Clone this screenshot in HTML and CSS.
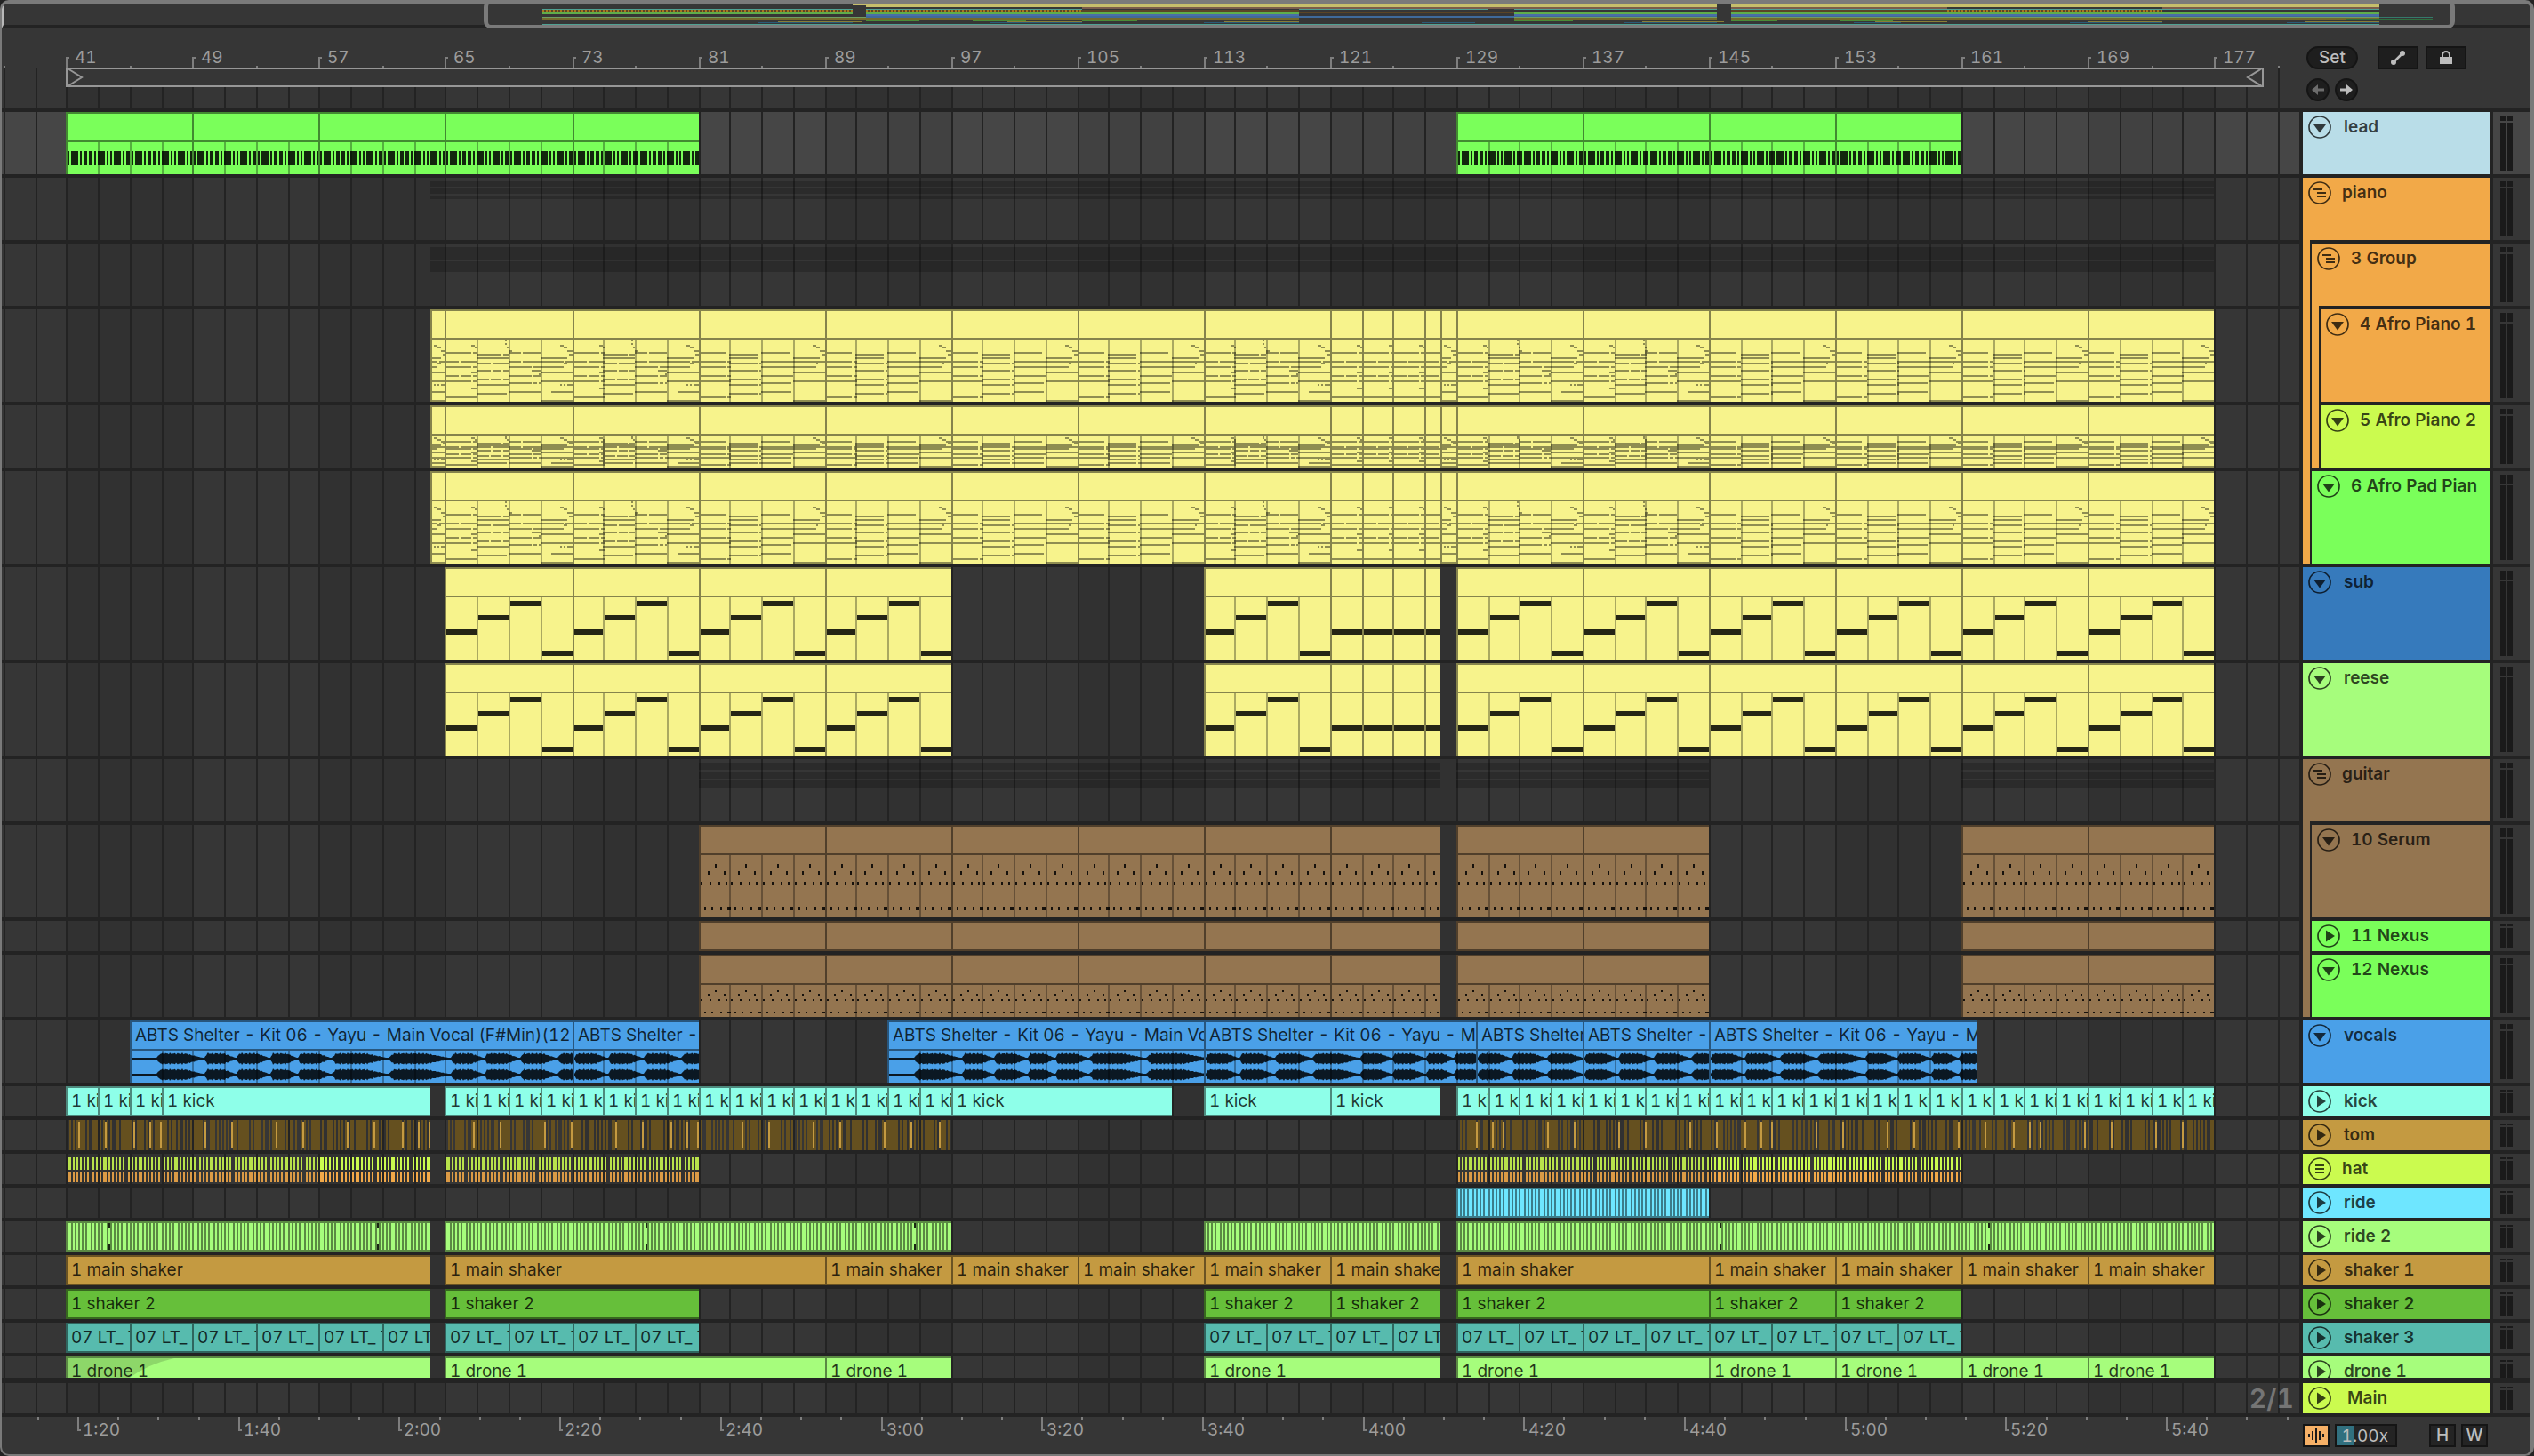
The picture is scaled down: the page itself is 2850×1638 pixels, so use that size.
FILE: index.html
```html
<!DOCTYPE html>
<html lang="en">
<head>
<meta charset="utf-8">
<title>Arrangement</title>
<meta name="viewport" content="width=device-width, initial-scale=1">
<link rel="stylesheet" href="styles.css">
</head>
<body>
<svg class="sprite" aria-hidden="true">
  <symbol id="i-open" viewBox="0 0 26 26"><circle cx="13" cy="13" r="12" fill="none" stroke="currentColor" stroke-width="1.700"/><path d="M6 10h14l-7 9.500z" fill="currentColor"/></symbol>
  <symbol id="i-closed" viewBox="0 0 26 26"><circle cx="13" cy="13" r="12" fill="none" stroke="currentColor" stroke-width="1.700"/><path d="M10 6.500v13l10-6.500z" fill="currentColor"/></symbol>
  <symbol id="i-group" viewBox="0 0 26 26"><circle cx="13" cy="13" r="12" fill="none" stroke="currentColor" stroke-width="1.700"/><path d="M6 9h10M10 13h10M10 17h10" fill="none" stroke="currentColor" stroke-width="2"/></symbol>
  <symbol id="i-list" viewBox="0 0 26 26"><circle cx="13" cy="13" r="12" fill="none" stroke="currentColor" stroke-width="1.700"/><path d="M8 9h10M8 13h10M8 17h10" fill="none" stroke="currentColor" stroke-width="2"/></symbol>
</svg>
<main class="app">
  <section class="overview" aria-label="Overview">
    <svg class="overview-map" viewBox="0 0 2844 24" preserveAspectRatio="none" shape-rendering="crispEdges"></svg>
    <div class="overview-window"></div>
  </section>

  <section class="top">
    <div class="timeline-head">
      <div class="ruler" id="bars"></div>
      <div class="scrub" id="scrub">
        <svg class="loop" id="loop"></svg>
      </div>
    </div>
    <div class="locators">
      <div class="controls">
        <button class="pill" type="button">Set</button>
        <button class="box first" type="button" aria-label="Automation mode"><svg width="18" height="18" viewBox="0 0 18 18"><path d="M4 14 14 4" stroke="currentColor" stroke-width="2.500"/><circle cx="4" cy="14" r="3" fill="currentColor"/><circle cx="14" cy="4" r="3" fill="currentColor"/></svg></button>
        <button class="box" type="button" aria-label="Lock envelopes"><svg width="18" height="18" viewBox="0 0 18 18"><path d="M2 8h14v8H2z" fill="currentColor"/><path d="M5 8V6a4 4 0 0 1 8 0v2" fill="none" stroke="currentColor" stroke-width="2"/></svg></button>
      </div>
      <div class="controls">
        <button class="round dim" type="button" aria-label="Previous locator"><svg width="16" height="14" viewBox="0 0 16 14"><path d="M1 7 8 1v4.500h7v3H8V13z" fill="currentColor"/></svg></button>
        <button class="round" type="button" aria-label="Next locator"><svg width="16" height="14" viewBox="0 0 16 14"><path d="M15 7 8 1v4.500H1v3h7V13z" fill="currentColor"/></svg></button>
      </div>
    </div>
  </section>

  <section class="board">
    <div class="lanes">
      <div class="lane mid selected green" data-kind="lead" data-clips="41 49 57 65 73 81|129 137 145 153 161"></div>
      <div class="lane mid" data-kind="ghost" data-rows="4-10 12-18 20-24" data-clips="64 177"></div>
      <div class="lane mid" data-kind="ghost" data-rows="4-18 20-32" data-clips="64 177"></div>
      <div class="lane tall yellow" data-kind="chords" data-clips="64 65 73 81 89 97 105 113 121 123 125 127 128 129 137 145 153 161 169 177"></div>
      <div class="lane mid yellow" data-kind="chords" data-clips="64 65 73 81 89 97 105 113 121 123 125 127 128 129 137 145 153 161 169 177"></div>
      <div class="lane tall yellow" data-kind="chords" data-clips="64 65 73 81 89 97 105 113 121 123 125 127 128 129 137 145 153 161 169 177"></div>
      <div class="lane tall yellow" data-kind="bass" data-clips="65 73 81 89 97|113 121 123 125 127 128|129 137 145 153 161 169 177"></div>
      <div class="lane tall yellow" data-kind="bass" data-clips="65 73 81 89 97|113 121 123 125 127 128|129 137 145 153 161 169 177"></div>
      <div class="lane mid" data-kind="ghost" data-rows="4-12 14-22 24-32" data-clips="81 128|129 145|161 177"></div>
      <div class="lane tall brown" data-kind="arp" data-clips="81 89 97 105 113 121 128|129 137 145|161 169 177"></div>
      <div class="lane brown" data-kind="plain" data-clips="81 89 97 105 113 121 128|129 137 145|161 169 177"></div>
      <div class="lane mid brown" data-kind="arp" data-clips="81 89 97 105 113 121 128|129 137 145|161 169 177"></div>
      <div class="lane mid blue" data-kind="wave" data-label="ABTS Shelter - Kit 06 - Yayu - Main Vocal (F#Min)(12" data-clips="45 73 81|93 113 130.25 137 145 162"></div>
      <div class="lane aqua" data-kind="plain" data-label="1 kick" data-clips="41 43 45 47 64|65 67 69 71 73 75 77 79 81 83 85 87 89 91 93 95 97 111|113 121 128|129 131 133 135 137 139 141 143 145 147 149 151 153 155 157 159 161 163 165 167 169 171 173 175 177"></div>
      <div class="lane gold" data-kind="tom" data-clips="41 64|65 97|129 177"></div>
      <div class="lane lime" data-kind="hat" data-clips="41 57 64|65 81|129 145 161"></div>
      <div class="lane cyan" data-kind="ride" data-clips="129 145"></div>
      <div class="lane mint" data-kind="ride" data-notches="43.65" data-clips="41 64|65 97|113 128|129 177"></div>
      <div class="lane gold" data-kind="plain" data-label="1 main shaker" data-clips="41 64|65 89 97 105 113 121 128|129 145 153 161 169 177"></div>
      <div class="lane leaf" data-kind="plain" data-label="1 shaker 2" data-clips="41 64|65 81|113 121 128|129 145 153 161"></div>
      <div class="lane teal" data-kind="plain" data-label="07 LT_ T" data-clips="41 45 49 53 57 61 64|65 69 73 77 81|113 117 121 125 128|129 133 137 141 145 149 153 157 161"></div>
      <div class="lane cut mint" data-kind="plain" data-label="1 drone 1" data-fade="41" data-clips="41 64|65 89 97|113 128|129 145 153 161 169 177"></div>
      <div class="lane main-lane" data-kind="plain" data-clips=""><span class="zoom-level">2/1</span></div>
    </div>

    <div class="heads">
      <div class="head mid sky"><button type="button" aria-label="Fold lead"><svg><use href="#i-open"/></svg></button><span>lead</span></div>
      <div class="group orange">
        <div class="head mid folder"><button type="button" aria-label="Fold piano"><svg><use href="#i-group"/></svg></button><span>piano</span></div>
        <div class="children">
          <div class="group orange">
            <div class="head mid folder"><button type="button" aria-label="Fold 3 Group"><svg><use href="#i-group"/></svg></button><span>3 Group</span></div>
            <div class="children">
              <div class="head tall folder orange"><button type="button" aria-label="Fold 4 Afro Piano 1"><svg><use href="#i-open"/></svg></button><span>4 Afro Piano 1</span></div>
              <div class="head mid folder lime"><button type="button" aria-label="Fold 5 Afro Piano 2"><svg><use href="#i-open"/></svg></button><span>5 Afro Piano 2</span></div>
            </div>
          </div>
          <div class="head tall folder green"><button type="button" aria-label="Fold 6 Afro Pad Piano"><svg><use href="#i-open"/></svg></button><span>6 Afro Pad Pian</span></div>
        </div>
      </div>
      <div class="head tall navy"><button type="button" aria-label="Fold sub"><svg><use href="#i-open"/></svg></button><span>sub</span></div>
      <div class="head tall mint"><button type="button" aria-label="Fold reese"><svg><use href="#i-open"/></svg></button><span>reese</span></div>
      <div class="group brown">
        <div class="head mid folder"><button type="button" aria-label="Fold guitar"><svg><use href="#i-group"/></svg></button><span>guitar</span></div>
        <div class="children">
          <div class="head tall folder brown"><button type="button" aria-label="Fold 10 Serum"><svg><use href="#i-open"/></svg></button><span>10 Serum</span></div>
          <div class="head folder green"><button type="button" aria-label="Unfold 11 Nexus"><svg><use href="#i-closed"/></svg></button><span>11 Nexus</span></div>
          <div class="head mid folder green"><button type="button" aria-label="Fold 12 Nexus"><svg><use href="#i-open"/></svg></button><span>12 Nexus</span></div>
        </div>
      </div>
      <div class="head mid blue"><button type="button" aria-label="Fold vocals"><svg><use href="#i-open"/></svg></button><span>vocals</span></div>
      <div class="head aqua"><button type="button" aria-label="Unfold kick"><svg><use href="#i-closed"/></svg></button><span>kick</span></div>
      <div class="head gold"><button type="button" aria-label="Unfold tom"><svg><use href="#i-closed"/></svg></button><span>tom</span></div>
      <div class="head folder lime"><button type="button" aria-label="Unfold hat"><svg><use href="#i-list"/></svg></button><span>hat</span></div>
      <div class="head cyan"><button type="button" aria-label="Unfold ride"><svg><use href="#i-closed"/></svg></button><span>ride</span></div>
      <div class="head mint"><button type="button" aria-label="Unfold ride 2"><svg><use href="#i-closed"/></svg></button><span>ride 2</span></div>
      <div class="head gold"><button type="button" aria-label="Unfold shaker 1"><svg><use href="#i-closed"/></svg></button><span>shaker 1</span></div>
      <div class="head leaf"><button type="button" aria-label="Unfold shaker 2"><svg><use href="#i-closed"/></svg></button><span>shaker 2</span></div>
      <div class="head teal"><button type="button" aria-label="Unfold shaker 3"><svg><use href="#i-closed"/></svg></button><span>shaker 3</span></div>
      <div class="head cut mint"><button type="button" aria-label="Unfold drone 1"><svg><use href="#i-closed"/></svg></button><span>drone 1</span></div>
      <div class="head main-head lime"><button type="button" aria-label="Unfold Main"><svg><use href="#i-closed"/></svg></button><span>Main</span></div>
    </div>

    <div class="meters" id="meters"></div>
  </section>

  <footer class="bottom">
    <div class="times" id="times"></div>
    <div class="footer-controls">
      <button class="key follow" type="button" aria-label="Waveform zoom"><svg width="20" height="18" viewBox="0 0 20 18"><path d="M2 7v4M6 4v10M10 1v16M14 4v10M18 7v4" stroke="#1a1a1a" stroke-width="2"/></svg></button>
      <input class="speed" type="text" value="1.00x" aria-label="Playback speed">
      <button class="key push" type="button">H</button>
      <button class="key" type="button">W</button>
    </div>
  </footer>
</main>
<script src="timeline.js"></script>
</body>
</html>
```
FILE: styles.css
```css
* { box-sizing: border-box; }

body {
  margin: 0;
  background: #232323;
  color: #9c9c9c;
  font: 400 19px/20px Inter, "Liberation Sans", sans-serif;
  font-variant-numeric: tabular-nums;
}

button, input { font: inherit; font-variant-numeric: inherit; color: inherit; margin: 0; padding: 0; }
.sprite { position: absolute; width: 0; height: 0; }

.app {
  min-height: 100vh;
  display: flex;
  flex-direction: column;
  border: solid #7a7a7a;
  border-width: 4px 4px 2px 2px;
  border-radius: 10px;
  background: #363636;
  overflow: hidden;
}

/* track colours */
.green  { --c: #7aff5a; }
.yellow { --c: #f7f38c; }
.brown  { --c: #947550; }
.blue   { --c: #4aa0e8; }
.navy   { --c: #367abc; }
.aqua   { --c: #8effe9; }
.gold   { --c: #c49a41; }
.lime   { --c: #cbfb4f; }
.cyan   { --c: #6ee6ff; }
.mint   { --c: #a6fd7c; }
.leaf   { --c: #66bf3a; }
.teal   { --c: #57bbae; }
.sky    { --c: #b9dde8; }
.orange { --c: #f2a948; }

/* overview */
.overview { position: relative; height: 28px; border-bottom: 4px solid #232323; border-left: 2px solid #b8b8b8; }
.overview-map { display: block; width: 100%; height: 24px; }
.overview-window {
  position: absolute;
  top: -4px;
  bottom: -4px;
  left: 19%;
  right: 3%;
  border: 4px solid #7a7a7a;
  border-left-width: 5px;
  border-right-width: 5px;
  border-radius: 8px;
}

/* bar ruler and locators */
.top { display: flex; border-bottom: 4px solid #232323; }
.timeline-head { flex: 1; min-width: 0; }
.ruler { position: relative; height: 44px; overflow: hidden; }
.ruler span, .times span { position: absolute; }
.ruler span { top: 23px; }
.ruler svg, .times svg, .grid, .scrub svg { position: absolute; inset: 0; width: 100%; height: 100%; }
.scrub { position: relative; height: 46px; overflow: hidden; }
.locators { width: 260px; padding: 20px 8px 0; display: flex; flex-direction: column; gap: 10px; }
.controls { display: flex; gap: 6px; color: #bdbdbd; }
.pill, .box, .round {
  height: 26px;
  border: 2px solid #151515;
  background: #1e1e1e;
  display: flex;
  align-items: center;
  justify-content: center;
}
.pill { width: 58px; border-radius: 13px; font-weight: 500; }
.box { width: 46px; margin-left: 2px; }
.box.first { margin-left: 16px; }
.round { width: 26px; border-radius: 50%; }
.dim { color: #6c6c6c; }

/* tracks */
.board {
  display: grid;
  grid-template-columns: minmax(0, 1fr) 210px 42px;
  column-gap: 4px;
  background: #232323;
  border-bottom: 4px solid #232323;
}
.lanes, .heads, .meters { display: flex; flex-direction: column; gap: 4px; min-width: 0; }
.lane, .head, .meter { height: 34px; overflow: hidden; }
.mid { height: 70px; }
.tall { height: 104px; }
.cut { height: 24px; }
.main-lane, .main-head { margin-top: 2px; }

.lane { position: relative; background: #363636; --shade: #313131; }
.lane.selected { background: #464646; --shade: #414141; }
.shade { fill: var(--shade, #313131); }
.lines { fill: #232323; }

.clip {
  position: absolute;
  top: 0;
  bottom: 0;
  overflow: hidden;
  display: flex;
  flex-direction: column;
  --edge: color-mix(in srgb, var(--c) 54%, black);
  background: var(--c);
  border-top: 2px solid var(--edge);
  border-left: 2px solid var(--edge);
}
.clip-name {
  flex: none;
  height: 30px;
  padding-left: 4px;
  line-height: 30px;
  white-space: nowrap;
  overflow: hidden;
  color: rgba(0, 0, 0, .78);
}
.clip-body { flex: 1; min-height: 2px; border-top: 2px solid var(--edge); position: relative; }
.clip-body svg, .raw svg { position: absolute; inset: 0; width: 100%; height: 100%; }
.fade { position: absolute; top: 0; left: 0; width: 120px; height: 30px; }
.fade path { fill: rgba(0, 0, 0, .15); }
.raw { position: absolute; top: 0; bottom: 0; overflow: hidden; }
.cell-lines { fill: rgba(0, 0, 0, .31); }
.soft { fill: rgba(0, 0, 0, .42); }
.hard { fill: rgba(0, 0, 0, .85); }
.ghost { fill: rgba(0, 0, 0, .2); }
.edge { fill: color-mix(in srgb, var(--c) 54%, black); }
.fill { fill: var(--c); }
.under { fill: #65501f; }
.accent { fill: #f2a948; }
.pale { opacity: .88; }

.zoom-level {
  position: absolute;
  right: 6px;
  top: 0;
  font-size: 30px;
  line-height: 34px;
  font-weight: 600;
  color: #757575;
}

.group { background: var(--c); }
.children {
  display: flex;
  flex-direction: column;
  gap: 4px;
  margin-left: 8px;
  border-left: 2px solid #232323;
  border-top: 4px solid #232323;
  background: #232323;
}
.head {
  background: var(--c);
  display: flex;
  align-items: flex-start;
  gap: 14px;
  padding: 0 0 0 6px;
  color: rgba(0, 0, 0, .74);
  font-weight: 600;
  white-space: nowrap;
}
.head.folder { gap: 12px; }
.head.main-head { gap: 18px; }
.head button { flex: none; margin-top: 4px; width: 26px; height: 26px; border: 0; background: none; }
.head svg { display: block; width: 26px; height: 26px; }
.head span { line-height: 30px; padding-top: 2px; }

.meter {
  flex: none;
  background: #363636;
  padding: 4px 8px;
  display: grid;
  grid-template-columns: 6px 6px;
  grid-template-rows: 2px 1fr;
  gap: 2px;
}
.meter.mid { grid-template-rows: 6px 1fr; }
.meter.tall { grid-template-rows: 10px 1fr; }
.meter.cut { padding-bottom: 0; }
.meter.selected { background: #464646; }
.meter.main-lane { margin-top: 2px; }
.meter i { background: #1a1a1a; }

/* time ruler */
.bottom { flex: 1; display: flex; min-height: 42px; }
.times { position: relative; flex: 1; overflow: hidden; }
.times span { top: 5px; }
.footer-controls { width: 256px; padding-top: 8px; display: flex; align-items: flex-start; gap: 6px; color: #bdbdbd; }
.key {
  width: 30px;
  height: 26px;
  border: 2px solid #151515;
  background: #242424;
  display: flex;
  align-items: center;
  justify-content: center;
  font-weight: 500;
}
.follow { background: #f6b066; }
.push { margin-left: 30px; }
.speed {
  width: 70px;
  height: 26px;
  border: 2px solid #151515;
  border-radius: 0;
  background: linear-gradient(to right, #31707f 20px, #242424 20px);
  text-align: right;
  padding-right: 8px;
}
```
FILE: timeline.js
```js
// Horizontal zoom: half-pixels per bar, with bar 65 at half-pixel 250.
const LANE_LEFT = 2;
const x = bar => 2 * Math.ceil(250 + 8.88 * (bar - 65)) - LANE_LEFT;
const LAST = 260;
const rect = (a, y, w, h) => `M${a} ${y}h${w}v${h}h${-w}z`;
const path = (cls, d) => `<path class="${cls}" d="${d}"/>`;
const svg = inner => `<svg shape-rendering="crispEdges">${inner}</svg>`;

function gridMarkup() {
  let shade = '', lines = '';
  for (let b = 33; b < LAST; b += 16) shade += rect(x(b + 8), 0, x(b + 16) - x(b + 8), 200);
  for (let b = 37; b < LAST; b += 2) lines += rect(x(b), 0, 2, 200);
  return `<svg class="grid" shape-rendering="crispEdges">${path('shade', shade)}${path('lines', lines)}</svg>`;
}
const GRID = gridMarkup();

// One two-bar chord cell: row -> spans, in 2px steps.
const CELLS = {
  A: '3:15-17 4:17-18 7:1-15,16-18 12:1-8,9-18 15:1-15,16-18 18:15-18 20:1-8,9-15,16-18 23:1-15,16-18 27:15-18 32:1-18',
  B: '0:16-17 2:16-17 4:17-18 8:0-14,15-18 10:0-18 13:0-8,9-18 17:0-8,9-14,15-18 22:0-7,8-14,15-18 25:0-18 30:0-17',
  C: '6:0-2 7:0-7,8-18 12:0-7,8-18 15:0-13,14-18 17:13-18 19:17-18 20:0-13,14-18 24:0-13,14-16,17-18 29:0-18',
  D: '3:11-13 4:13-15 6:15-18 8:16-18 10:0-15 12:0-13,14-18 13:13-15 15:0-13 18:0-18 23:0-18 25:11-12,13-14,15-18 29:6-18 34:0-18',
  a: '7:1-15 12:1-15,16-18 15:1-15,16-18 20:1-15,16-18 23:1-18 32:1-15,16-18',
  b: '8:0-16 10:0-16 13:0-16,17-18 17:0-16,17-18 22:0-16,17-18 25:0-16,17-18 30:0-16,17-18',
  c: '7:0-16 12:0-18 15:0-18 20:0-18 24:0-17 29:0-17',
  d: '3:11-13 4:13-15 6:15-18 8:16-18 10:0-15 12:0-18 13:13-14 15:0-13 18:0-18 23:0-18 34:0-18'
};
function chordCell(bar, clipStart) {
  if (clipStart === 128 || bar < 65) return 'D';
  if (bar >= 121 && bar < 129) return 'A';
  const set = (bar >= 81 && bar < 113) || bar >= 145 ? 'abcd' : 'ABCD';
  return set[((bar - 65) / 2) % 4];
}

// Lead melody rhythm over four bars: note, rest, note, rest ... in 2px steps.
const LEAD = [1, 1, 4, 1, 1, 1, 2, 1, 2, 1, 1, 1, 4, 1, 1, 1, 1, 1, 4, 1, 1, 1, 2, 1];

const bodies = {
  chords(c) {
    let d = '';
    const first = c.from % 2 ? c.from : c.from - 1;
    for (let b = first; b < c.to; b += 2) {
      for (const row of CELLS[chordCell(b, c.from)].split(' ')) {
        const [r, spans] = row.split(':');
        const y = c.short ? Math.floor((+r + 0.45) * 18 / 35) : +r;
        for (const s of spans.split(',')) {
          const [p, q] = s.split('-').map(Number);
          d += rect(x(b) + p * 2 - c.origin, y * 2, (q - p) * 2, 2);
        }
      }
    }
    return path('soft', d);
  },
  bass(c) {
    let d = '';
    const level = [36, 20, 4, 60];
    for (let b = c.from; b < c.to; b += 2) {
      const i = c.from >= 121 && c.from < 129 ? 0 : ((b - 65) / 2) % 4;
      d += rect(x(b) + 2 - c.origin, level[i], x(b + 2) - x(b) - 2, 6);
    }
    return path('hard', d);
  },
  arp(c) {
    let d = '';
    const rows = c.short ? [[6, [9]], [10, [5, 14]], [16, [1, 6, 11, 15]], [30, [3, 7, 12, 16, 17]]]
                         : [[10, [9]], [18, [5, 14]], [30, [1, 6, 11, 15]], [58, [3, 7, 12, 16, 17]]];
    for (let b = c.from; b < c.to; b += 2)
      for (const [y, at] of rows)
        for (const p of at) d += rect(x(b) + p * 2 - c.origin, y, 2, c.short ? 2 : 4);
    return path('hard', d);
  },
  lead(c) {
    let d = '';
    for (let b = c.from; b < c.to; b += 4) {
      let p = x(b) + 2 - c.origin;
      LEAD.forEach((n, i) => {
        if (i % 2 === 0) d += rect(p, 10, n * 2, 16);
        p += n * 2;
      });
    }
    return path('hard', d);
  },
  wave(c) {
    let d = '';
    const w = c.width, blob = [54, 36, 38, 31, 38, 64, 70, 38, 40, 42];
    const lead = c.from === 45 || c.from === 93 ? 28 : 0;
    for (const mid of [9, 27]) {
      let pos = lead, i = lead ? 0 : 7;
      const pts = [[0, 1], [lead, 1]];
      while (pos < w) {
        const len = blob[i % blob.length];
        for (let k = 0; k < len && pos + k < w; k++) {
          const t = k / len;
          const env = Math.min(1, t * 12) * (t > 0.6 ? Math.max(0, 1 - (t - 0.6) * 2.8) : 1);
          const jit = 0.78 + 0.22 * Math.sin(pos * 3.1 + k * 2.7) * Math.cos(k * 1.3 + i);
          pts.push([pos + k, 1 + 6 * env * jit]);
        }
        pos += len;
        i++;
      }
      pts.push([w, 1]);
      d += 'M' + pts.map(p => `${p[0]} ${(mid - p[1]).toFixed(1)}`).join('L')
         + 'L' + pts.reverse().map(p => `${p[0]} ${(mid + p[1]).toFixed(1)}`).join('L') + 'z';
    }
    return `<path class="hard" shape-rendering="auto" d="${d}"/>`;
  },
  plain() { return ''; }
};

const raws = {
  ghost(c, lane) {
    return path('ghost', lane.dataset.rows.split(' ').map(r => {
      const [a, b] = r.split('-').map(Number);
      return rect(0, a, c.width, b - a);
    }).join(''));
  },
  tom(c) {
    let under = '', top = '';
    const pat = [2, 2, 10, 2, 6, 2, 2, 2, 2, 4, 12, 2, 8, 2, 2, 14, 2, 4, 2, 2];
    for (let p = 4, i = 0; p < c.width; i++) {
      const w = pat[i % pat.length];
      under += rect(p, 0, w, 34);
      p += w + (i % 5 === 3 ? 4 : 2);
    }
    // accented hits repeat every 17 bars
    for (let base = 29.95; base < c.to; base += 17)
      for (const off of [2.8, 4.5, 7.3, 9, 11.8, 13.5, 15.3, 16.3, 17]) {
        const b = base + off;
        if (b > c.from && b < c.to) top += rect(x(b) - c.origin, 2, 2, 30);
      }
    return path('under', under) + path('fill', top);
  },
  hat(c) {
    let a = '', b = '', wide = 0;
    for (let q = c.from; q < c.to; q += 0.25) {
      const step = x(q + 0.25) - x(q);
      const w = step > 4 && wide++ % 2 === 0 ? 4 : 2;
      a += rect(x(q) + 2 - c.origin, 4, w, 14);
      b += rect(x(q) + 2 - c.origin, 20, w, 12);
    }
    const quiet = c.from === 57 || c.from === 145 ? '' : ' pale';
    return path('fill' + quiet, a) + path('accent' + quiet, b);
  },
  ride(c, lane) {
    let d = '', cuts = '';
    for (let q = c.from; q < c.to; q += 0.25) d += rect(x(q) - c.origin, 0, 2, 34);
    if (lane.dataset.notches)
      for (let b = +lane.dataset.notches; b < c.to; b += 17)
        if (b > c.from) cuts += rect(x(b) - c.origin, 2, 2, 6) + rect(x(b) - c.origin, 26, 2, 6);
    return path('fill', rect(0, 0, c.width, 34))
         + path('edge', d + rect(0, 0, c.width, 2) + rect(0, 32, c.width, 2))
         + path('hard', cuts);
  }
};

for (const lane of document.querySelectorAll('.lane')) {
  const { kind, clips, label = '', fade } = lane.dataset;
  let html = GRID;
  for (const run of clips.split('|').filter(Boolean)) {
    const marks = run.split(' ').map(Number);
    for (let i = 0; i < marks.length - 1; i++) {
      const c = { from: marks[i], to: marks[i + 1], short: lane.classList.contains('mid') };
      c.left = x(c.from);
      c.width = x(c.to) - c.left;
      const style = `style="left:${c.left}px;width:${c.width}px"`;
      if (raws[kind]) {
        c.origin = c.left;
        html += `<div class="raw" ${style}>${svg(raws[kind](c, lane))}</div>`;
      } else {
        c.origin = c.left + 2;
        let cell = '';
        if (kind !== 'plain')
          for (let b = Math.ceil((c.from + 1) / 2) * 2 - 1; b < c.to; b += 2)
            if (b > c.from) cell += rect(x(b) - c.origin, 0, 2, 80);
        const ramp = +fade === c.from ? '<svg class="fade"><path d="M0 0H120Q84 8 60 30H0z"/></svg>' : '';
        html += `<div class="clip" ${style}>${ramp}<div class="clip-name">${label}</div>`
              + `<div class="clip-body">${svg(path('cell-lines', cell) + bodies[kind](c))}</div></div>`;
      }
    }
  }
  lane.insertAdjacentHTML('afterbegin', html);
}

// Meters follow the lanes' heights.
document.getElementById('meters').innerHTML = [...document.querySelectorAll('.lane')].map(l => {
  const cls = ['mid', 'tall', 'cut', 'selected', 'main-lane'].filter(k => l.classList.contains(k)).join(' ');
  return `<div class="meter ${cls}"><i></i><i></i><i></i><i></i></div>`;
}).join('');

// Bar and time rulers, redrawn to the width of the window
function drawRulers() {
  const bars = document.getElementById('bars'), times = document.getElementById('times');
  const width = bars.clientWidth;
  const ticks = d => `<svg shape-rendering="crispEdges" fill="#7e7e7e"><path d="${d}"/></svg>`;

  let d = '', text = '';
  for (let b = 37; x(b) < width; b += 4) {
    if ((b - 41) % 8 === 0) {
      d += rect(x(b), 32, 2, 12) + rect(x(b), 32, 4, 2);
      if (x(b) + 50 < width) text += `<span style="left:${x(b) + 10}px">${b}</span>`;
    } else d += rect(x(b), 42, 2, 2);
  }
  bars.innerHTML = ticks(d) + text;

  d = text = '';
  for (let t = 75, px; (px = Math.round(85 + (t - 80) * 9.035)) < width; t += 5) {
    if (t % 20 === 0) {
      d += rect(px, 0, 2, 16) + rect(px, 14, 4, 2);
      if (px + 60 < width) text += `<span style="left:${px + 6}px">${Math.floor(t / 60)}:${String(t % 60).padStart(2, '0')}</span>`;
    } else d += rect(px, 0, 2, 4);
  }
  times.innerHTML = ticks(d) + text;
}
drawRulers();
addEventListener('resize', drawRulers);

// Loop brace
{
  const a = x(41), b = x(180) + 2;
  document.getElementById('scrub').insertAdjacentHTML('afterbegin', GRID);
  document.getElementById('loop').innerHTML =
    `<path fill="#363636" stroke="#979797" stroke-width="2" d="M${a + 1} 1H${b - 1}V21H${a + 1}z"/>`
    + `<path fill="none" stroke="#979797" stroke-width="2" d="M${a + 2} 1l16 10-16 10M${b - 2} 1l-16 10 16 10"/>`;
}

// Overview map: colour, y, height, then start-end spans
{
  const rows = [
    ['#4c9e35', 0, 1, '610-1218 1948-2434'],
    ['#c6be6c', 1, 3, '975-1932 1948-2678'], ['#c6be6c', 1, 1, '960-975'],
    ['#7a5c4c', 4, 2, '1218-1932 1948-2192 2434-2678'],
    ['#4fa193', 6, 1, '610-960 975-1218 1462-1674 1704-1932 1948-2678'],
    ['#5a4526', 7, 3, '610-960 975-1462 1948-2434'],
    ['#5a4526', 9, 2, '1462-1704'],
    ['#5fae4a', 9, 3, '610-960 975-1462 1704-1932 1948-2678'],
    ['#4a6ea8', 12, 2, '975-1462 1704-1932 1948-2678'],
    ['#3f6a9a', 14, 2, '975-1932 1948-2678'],
    ['#6f9e62', 15, 1, '610-975 1704-1932 1948-2678'],
    ['#74692c', 16, 2, '610-1462 1704-1932 1948-2678'],
    ['#5f8f2f', 18, 1, '965-1080 1210-1324 1700-1800 1920-2050 2184-2300'],
    ['#4a8b35', 19, 1, '975-1035 1095-1155 1218-1280 1704-1770 1948-2000 2070-2130'],
    ['#8a7f35', 20, 1, '876-970 1134-1218 1378-1462 1848-1940 2110-2192 2350-2434 2594-2678'],
    ['#2b5a78', 21, 1, '854-960 1114-1218 1355-1462 1600-1660 1828-1932 2086-2140 2330-2434 2574-2678'],
    ['#357a6b', 15, 1, '2678-2738'], ['#2f6f3f', 17, 1, '2640-2738'],
    ['#4fa193', 23, 1, '610-2678']
  ];
  let out = rows.map(([c, y, h, s]) => `<path fill="${c}" d="${s.split(' ').map(p => {
    const [a, b] = p.split('-').map(Number);
    return rect(a - LANE_LEFT - 2, y, b - a, h);
  }).join('')}"/>`).join('');
  let dots = '';
  for (const [a, b] of [[610, 960], [975, 1218], [2192, 2434]])
    for (let p = a; p < b; p += 4) dots += rect(p - LANE_LEFT - 2, 7, 2, 2);
  out += `<path fill="#a8781f" d="${dots}"/>`;
  document.querySelector('.overview-map').innerHTML = out;
}
```
